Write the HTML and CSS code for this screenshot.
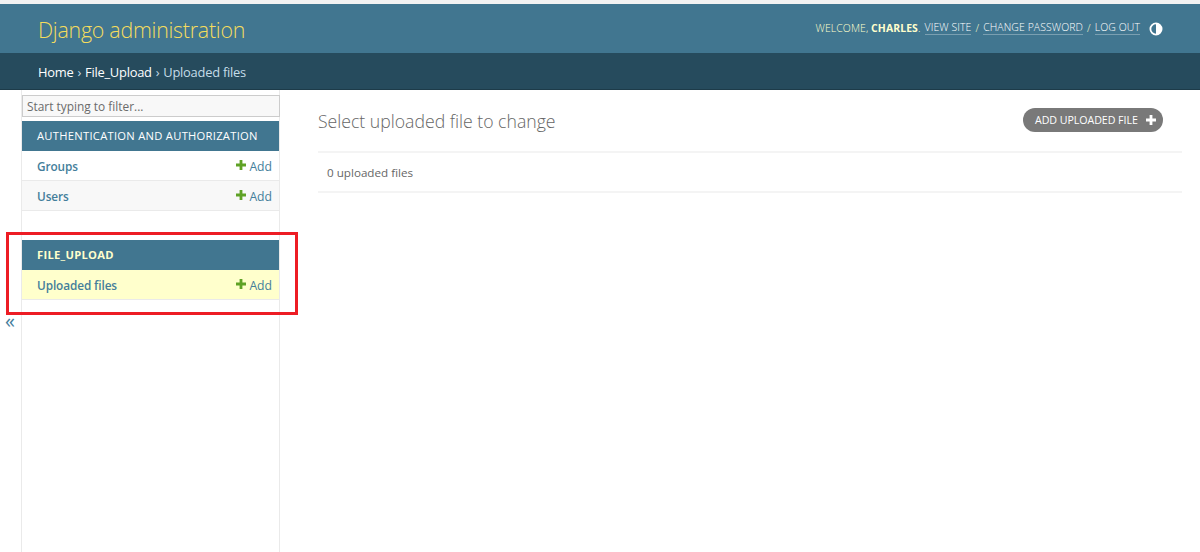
FILE: index.html
```html
<!DOCTYPE html>
<html lang="en">
<head>
<meta charset="utf-8">
<title>Select uploaded file to change</title>
<link rel="stylesheet" href="styles.css">
</head>
<body>
<header class="header">
  <h1 class="brand">Django administration</h1>
  <div class="tools">
    <span>Welcome, <strong>Charles</strong>.</span>
    <a href="#">View site</a> /
    <a href="#">Change password</a> /
    <a href="#">Log out</a>
    <svg class="theme" viewBox="0 0 14 14" width="14" height="14"><circle cx="7" cy="7" r="5.6" fill="none" stroke="#fff" stroke-width="1.8"/><path d="M7 1.4a5.6 5.6 0 0 1 0 11.2z" fill="#fff"/></svg>
  </div>
</header>
<nav class="crumbs"><a href="#">Home</a> <span class="sep">›</span> <a href="#">File_Upload</a> <span class="sep">›</span> <span>Uploaded files</span></nav>
<div class="shell">
  <div class="toggle-col"><button class="toggle">«</button></div>
  <aside class="sidebar">
    <input class="filter" placeholder="Start typing to filter...">
    <section class="module">
      <h2 class="caption">Authentication and Authorization</h2>
      <div class="row"><a class="name" href="#">Groups</a><a class="add" href="#"><svg class="plus" viewBox="0 0 10 10" width="10" height="10"><path d="M3.6 0h2.8v3.6H10v2.8H6.4V10H3.6V6.4H0V3.6h3.6z" fill="#5fa225"/></svg>Add</a></div>
      <div class="row alt"><a class="name" href="#">Users</a><a class="add" href="#"><svg class="plus" viewBox="0 0 10 10" width="10" height="10"><path d="M3.6 0h2.8v3.6H10v2.8H6.4V10H3.6V6.4H0V3.6h3.6z" fill="#5fa225"/></svg>Add</a></div>
    </section>
    <section class="module">
      <h2 class="caption current">File_Upload</h2>
      <div class="row selected"><a class="name" href="#">Uploaded files</a><a class="add" href="#"><svg class="plus" viewBox="0 0 10 10" width="10" height="10"><path d="M3.6 0h2.8v3.6H10v2.8H6.4V10H3.6V6.4H0V3.6h3.6z" fill="#5fa225"/></svg>Add</a></div>
    </section>
    <div class="highlight"></div>
  </aside>
  <main class="main">
    <div class="title-bar">
      <h1 class="title">Select uploaded file to change</h1>
      <a class="add-btn" href="#">Add uploaded file<svg viewBox="0 0 10 10" width="10" height="10"><path d="M3.6 0h2.8v3.6H10v2.8H6.4V10H3.6V6.4H0V3.6h3.6z" fill="#fff"/></svg></a>
    </div>
    <p class="count">0 uploaded files</p>
  </main>
</div>
</body>
</html>
```
FILE: styles.css
```css
* { box-sizing: border-box; }
html, body { margin: 0; height: 552px; overflow: hidden; }
body {
  font-family: "Open Sans", "Noto Sans", "DejaVu Sans", sans-serif;
  font-size: 13px;
  color: #333;
  background: #fff;
  padding-top: 4px;
  background-image: linear-gradient(#f2f2f2, #f2f2f2);
  background-size: 100% 4px;
  background-repeat: no-repeat;
}
a { text-decoration: none; }

.header {
  height: 49px;
  background: #417690;
  display: flex;
  align-items: center;
  justify-content: space-between;
  padding: 0 38px;
}
.brand {
  margin: 2px 0 0;
  font-size: 21.4px;
  font-weight: 300;
  color: #f5dd5d;
  letter-spacing: -0.25px;
}
.tools {
  display: flex;
  align-items: center;
  gap: 4px;
  padding-bottom: 2px;
  font-size: 10.45px;
  font-weight: 300;
  text-transform: uppercase;
  color: #ffc;
  letter-spacing: 0.1px;
}
.tools strong { font-weight: 700; }
.tools a { color: #fff; border-bottom: 1px solid rgba(255,255,255,.3); line-height: 14px; }
.theme { margin: 2px -0.5px 0 4.5px; }

.crumbs {
  height: 37px;
  background: #264b5d;
  border-bottom: 1px solid #1d3b49;
  padding: 2px 38px 0;
  display: flex;
  align-items: center;
  gap: 4px;
  font-size: 12.9px;
  color: #c4dce8;
  letter-spacing: -0.25px;
}
.crumbs a { color: #fff; }
.crumbs .sep { color: #c4dce8; }

.shell { display: flex; height: 462px; }
.toggle-col { width: 22px; position: relative; border-right: 1px solid #eaeaea; }
.toggle {
  position: absolute;
  left: 5px;
  top: 220px;
  padding: 0;
  border: 0;
  background: none;
  color: #447e9b;
  font: 20px/22px "Open Sans", sans-serif;
}
.sidebar {
  width: 258px;
  border-right: 1px solid #eaeaea;
  padding-top: 5px;
  position: relative;
}
.filter {
  display: block;
  width: 258px;
  height: 22px;
  padding: 0 4px;
  border: 1px solid #ccc;
  background: #f8f8f8;
  font: 11.9px "Open Sans", sans-serif;
}
.filter::placeholder { color: #6b6b6b; opacity: 1; }
.module { margin-top: 4px; margin-bottom: 29px; }
.caption {
  margin: 0;
  height: 30px;
  background: #417690;
  color: #fff;
  padding: 0 15px 2px;
  display: flex;
  align-items: center;
  font-size: 11.2px;
  font-weight: 400;
  text-transform: uppercase;
  letter-spacing: 0.28px;
}
.caption.current { font-weight: 700; color: #ffc; }
.row {
  height: 30px;
  display: flex;
  align-items: center;
  justify-content: space-between;
  padding: 0 7px 0 15px;
  border-bottom: 1px solid #eaeaea;
  background: #fff;
  font-size: 11.8px;
}
.row.alt { background: #f8f8f8; }
.row.selected { background: #ffc; }
.row .name { color: #447e9b; font-weight: 600; letter-spacing: -0.1px; }
.row .add { color: #447e9b; display: flex; align-items: center; gap: 3px; padding-top: 2px; font-size: 12.2px; }
.plus { margin-top: -4px; }
.highlight {
  position: absolute;
  left: -16px;
  top: 142px;
  width: 292px;
  height: 83px;
  border: 3px solid #ed1c24;
  pointer-events: none;
}

.main { flex: 1; padding: 0 18px 0 38px; min-width: 0; }
.title-bar {
  height: 63px;
  display: flex;
  align-items: center;
  justify-content: space-between;
  padding: 0 19px 1px 0;
  border-bottom: 2px solid #f4f4f4;
}
.title { margin: 1px 0 0; font-size: 17.65px; font-weight: 300; color: #666; }
.add-btn {
  height: 24px;
  width: 140px;
  border-radius: 12px;
  background: #797979;
  color: #fff;
  display: flex;
  align-items: center;
  justify-content: space-between;
  padding: 0 7px 0 12px;
  font-size: 10.65px;
  text-transform: uppercase;
  letter-spacing: -0.05px;
}
.count {
  margin: 0;
  height: 40px;
  padding: 0 9px;
  display: flex;
  align-items: center;
  border-bottom: 2px solid #f4f4f4;
  font-size: 11.65px;
  color: #666;
}
```
